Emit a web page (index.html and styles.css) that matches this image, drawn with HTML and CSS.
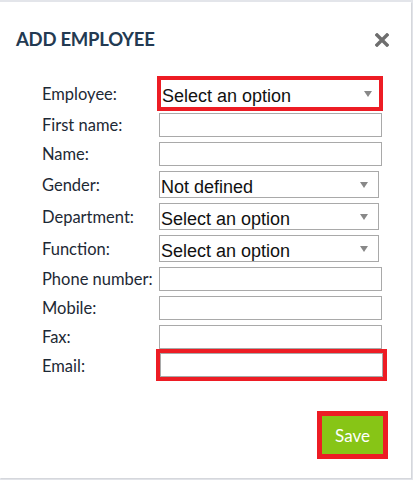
FILE: index.html
```html
<!DOCTYPE html>
<html>
<head>
<meta charset="utf-8">
<link rel="stylesheet" href="styles.css">
</head>
<body>
<div class="modal">
  <div class="header">
    <h2 class="title">ADD EMPLOYEE</h2>
    <button class="close" aria-label="Close">
      <svg width="14" height="14" viewBox="0 0 14 14"><path d="M2 2 L12 12 M12 2 L2 12" stroke="#6e6e6e" stroke-width="3.4" stroke-linecap="square" fill="none"/></svg>
    </button>
  </div>
  <form class="form">
    <label class="label label-hl">Employee:</label>
    <div class="select hl"><span class="value">Select an option</span><span class="arrow"></span></div>

    <label class="label">First name:</label>
    <input class="input" type="text">

    <label class="label">Name:</label>
    <input class="input" type="text">

    <label class="label">Gender:</label>
    <div class="select"><span class="value">Not defined</span><span class="arrow"></span></div>

    <label class="label">Department:</label>
    <div class="select"><span class="value">Select an option</span><span class="arrow"></span></div>

    <label class="label">Function:</label>
    <div class="select"><span class="value">Select an option</span><span class="arrow"></span></div>

    <label class="label">Phone number:</label>
    <input class="input" type="text">

    <label class="label">Mobile:</label>
    <input class="input" type="text">

    <label class="label">Fax:</label>
    <input class="input" type="text">

    <label class="label">Email:</label>
    <input class="input input-hl" type="text">
  </form>
  <div class="footer">
    <button class="save" type="button">Save</button>
  </div>
</div>
</body>
</html>
```
FILE: styles.css
```css
html, body {
  margin: 0;
  padding: 0;
}
body {
  background: #e3e5ea;
  font-family: Lato, "Open Sans", sans-serif;
  height: 480px;
  overflow: hidden;
}
.modal {
  background: #fff;
  margin: 2px 2px 0 0;
  height: 476px;
  box-sizing: border-box;
  box-shadow: 1px 1px 1px rgba(0, 0, 0, 0.06);
}
.header {
  height: 74px;
  display: flex;
  align-items: center;
  justify-content: space-between;
  padding: 0 22px 0 16px;
}
.title {
  margin: 0;
  font: 700 18.5px/24px Lato, sans-serif;
  letter-spacing: -0.25px;
  color: #233a52;
}
.close {
  border: 0;
  background: none;
  padding: 0;
  width: 14px;
  height: 14px;
  display: block;
  margin-top: 1px;
}
.close svg {
  display: block;
}
.form {
  display: grid;
  grid-template-columns: 117px auto;
  row-gap: 5px;
  padding-left: 42px;
  align-items: center;
  justify-items: start;
}
.label {
  font-size: 16.5px;
  line-height: 20px;
  color: #1d2935;
  white-space: nowrap;
}
.label-hl {
  padding-top: 4px;
}
.input {
  width: 223px;
  height: 24px;
  box-sizing: border-box;
  border: 1px solid #a9a9a9;
  margin: 0;
  padding: 0 2px;
  background: #fff;
}
.input-hl {
  outline: 4px solid #ed1c24;
  margin-top: -1px;
  margin-left: 1px;
}
.select {
  width: 220px;
  height: 27px;
  box-sizing: border-box;
  border: 1px solid #a9a9a9;
  display: flex;
  align-items: center;
  justify-content: space-between;
  padding: 0 10px 0 1px;
  font: 18px "Liberation Sans", Arial, sans-serif;
  color: #111;
}
.value {
  padding-top: 4px;
  line-height: 20px;
}
.select.hl {
  border: 4px solid #ed1c24;
  width: 226px;
  height: 35px;
  margin-left: -2px;
  margin-bottom: -3px;
  padding: 0 7px 0 1px;
}
.arrow {
  width: 0;
  height: 0;
  border-left: 4px solid transparent;
  border-right: 4px solid transparent;
  border-top: 6px solid #888;
}
.footer {
  display: flex;
  justify-content: flex-end;
  padding-right: 28px;
  margin-top: 39px;
}
.save {
  width: 61px;
  height: 38px;
  background: #87c516;
  color: #fff;
  border: 0;
  outline: 5px solid #ed1c24;
  font: 17px Lato, sans-serif;
  padding: 0;
}
```
